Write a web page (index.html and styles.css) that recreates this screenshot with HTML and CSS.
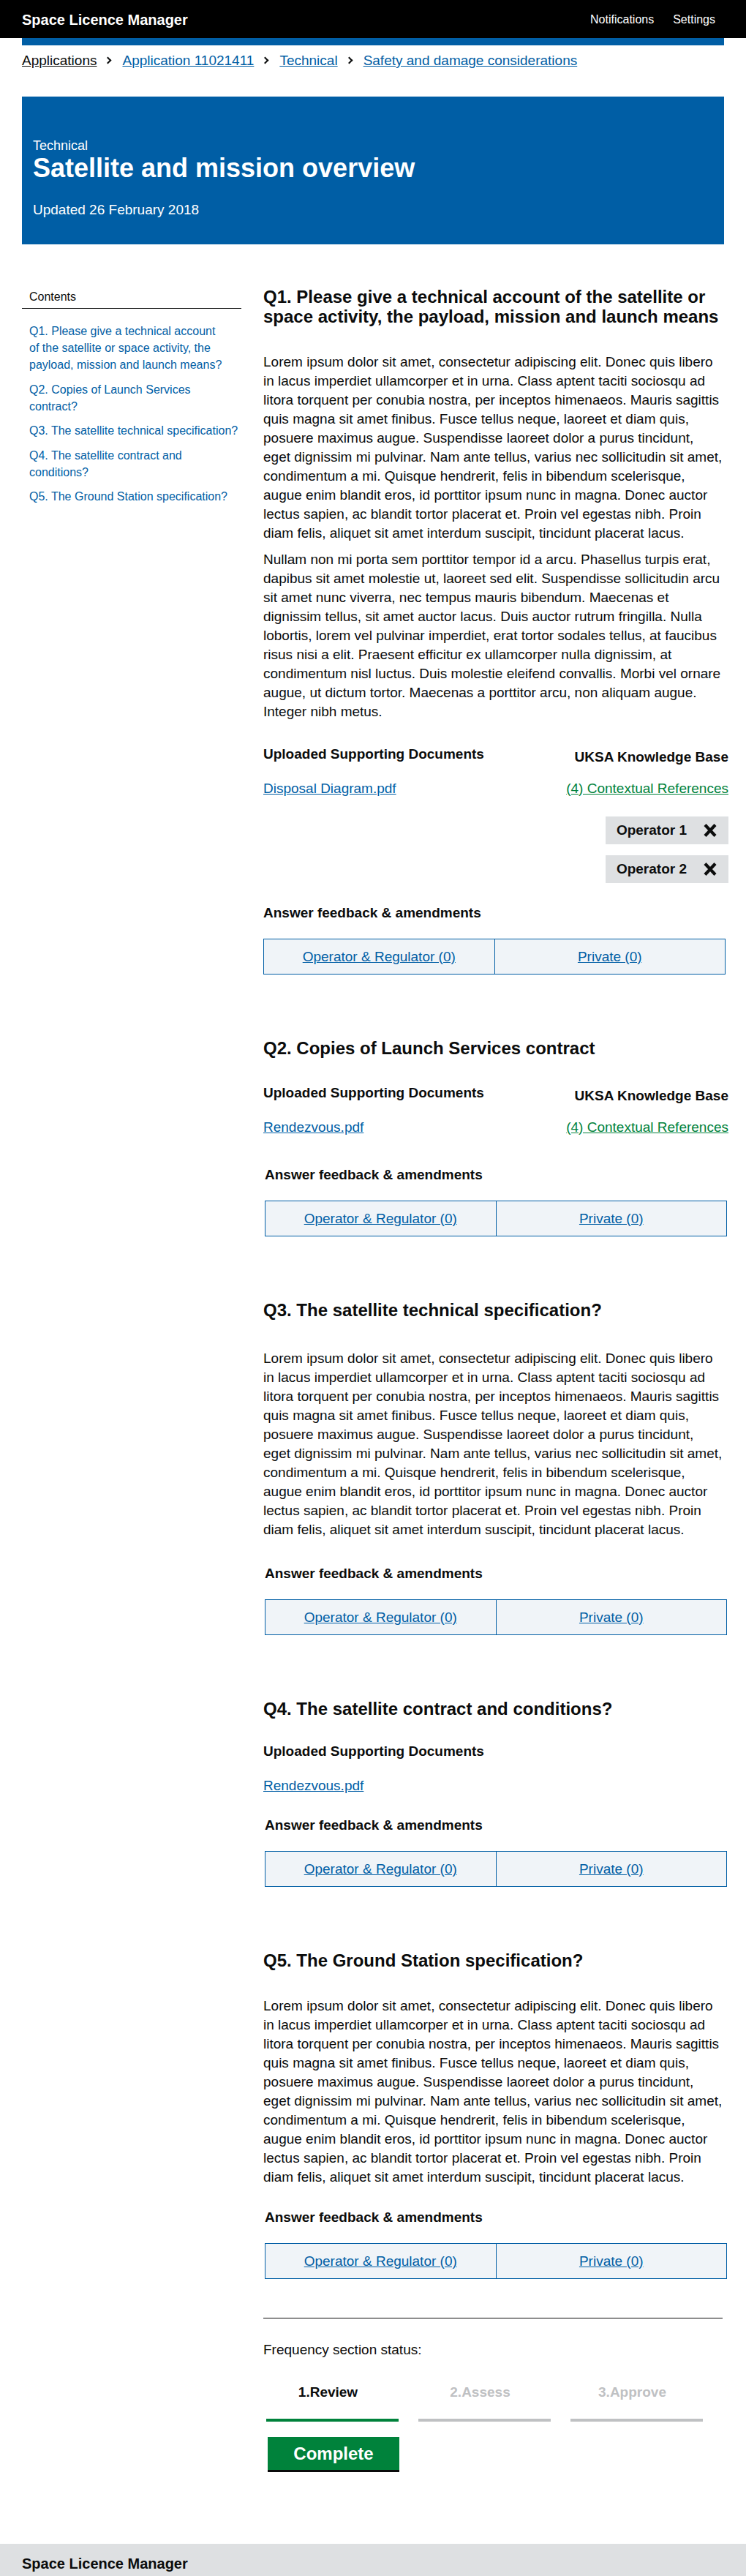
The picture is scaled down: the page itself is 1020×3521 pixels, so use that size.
FILE: index.html
```html
<!DOCTYPE html>
<html lang="en">
<head>
<meta charset="utf-8">
<title>Space Licence Manager</title>
<link rel="stylesheet" href="styles.css">
</head>
<body>
<header class="site-header">
  <div class="brand">Space Licence Manager</div>
  <nav class="header-nav">
    <a href="#">Notifications</a>
    <a href="#">Settings</a>
  </nav>
</header>

<div class="page">
  <div class="accent-bar"></div>

  <nav class="breadcrumbs">
    <a class="crumb crumb-root" href="#">Applications</a>
    <span class="chev"></span>
    <a class="crumb" href="#">Application 11021411</a>
    <span class="chev"></span>
    <a class="crumb" href="#">Technical</a>
    <span class="chev"></span>
    <a class="crumb" href="#">Safety and damage considerations</a>
  </nav>

  <section class="hero">
    <div class="hero-caption">Technical</div>
    <h1 class="hero-title">Satellite and mission overview</h1>
    <div class="hero-updated">Updated 26 February 2018</div>
  </section>

  <div class="layout">
    <aside class="sidebar">
      <h2 class="contents-title">Contents</h2>
      <ul class="toc">
        <li><a href="#q1">Q1. Please give a technical account<br>of the satellite or space activity, the payload, mission and launch means?</a></li>
        <li><a href="#q2">Q2. Copies of Launch Services contract?</a></li>
        <li><a href="#q3">Q3. The satellite technical specification?</a></li>
        <li><a href="#q4">Q4. The satellite contract and conditions?</a></li>
        <li><a href="#q5">Q5. The Ground Station specification?</a></li>
      </ul>
    </aside>

    <main class="main">
      <!-- Q1 -->
      <section class="question" id="q1">
        <h2 class="q-title">Q1. Please give a technical account of the satellite or space activity, the payload, mission and launch means</h2>
        <p class="answer answer-first">Lorem ipsum dolor sit amet, consectetur adipiscing elit. Donec quis libero in lacus imperdiet ullamcorper et in urna. Class aptent taciti sociosqu ad litora torquent per conubia nostra, per inceptos himenaeos. Mauris sagittis quis magna sit amet finibus. Fusce tellus neque, laoreet et diam quis, posuere maximus augue. Suspendisse laoreet dolor a purus tincidunt, eget dignissim mi pulvinar. Nam ante tellus, varius nec sollicitudin sit amet, condimentum a mi. Quisque hendrerit, felis in bibendum scelerisque, augue enim blandit eros, id porttitor ipsum nunc in magna. Donec auctor lectus sapien, ac blandit tortor placerat et. Proin vel egestas nibh. Proin diam felis, aliquet sit amet interdum suscipit, tincidunt placerat lacus.</p>
        <p class="answer">Nullam non mi porta sem porttitor tempor id a arcu. Phasellus turpis erat, dapibus sit amet molestie ut, laoreet sed elit. Suspendisse sollicitudin arcu sit amet nunc viverra, nec tempus mauris bibendum. Maecenas et dignissim tellus, sit amet auctor lacus. Duis auctor rutrum fringilla. Nulla lobortis, lorem vel pulvinar imperdiet, erat tortor sodales tellus, at faucibus risus nisi a elit. Praesent efficitur ex ullamcorper nulla dignissim, at condimentum nisl luctus. Duis molestie eleifend convallis. Morbi vel ornare augue, ut dictum tortor. Maecenas a porttitor arcu, non aliquam augue. Integer nibh metus.</p>

        <div class="docs docs-after-text">
          <div class="docs-left">
            <h3 class="sub-title">Uploaded Supporting Documents</h3>
            <a class="doc-link" href="#">Disposal Diagram.pdf</a>
          </div>
          <div class="docs-right">
            <h3 class="sub-title kb-title">UKSA Knowledge Base</h3>
            <a class="kb-link" href="#">(4) Contextual References</a>
            <div class="tags">
              <div class="tag"><span>Operator 1</span>
                <svg class="tag-x" width="20" height="18" viewBox="0 0 20 18" aria-hidden="true"><path d="M3 1.5 L17 16.5 M17 1.5 L3 16.5" stroke="#0b0c0c" stroke-width="4.2" fill="none"/></svg>
              </div>
              <div class="tag"><span>Operator 2</span>
                <svg class="tag-x" width="20" height="18" viewBox="0 0 20 18" aria-hidden="true"><path d="M3 1.5 L17 16.5 M17 1.5 L3 16.5" stroke="#0b0c0c" stroke-width="4.2" fill="none"/></svg>
              </div>
            </div>
          </div>
        </div>

        <div class="fb-block">
          <h3 class="sub-title feedback-title fb-after-tags">Answer feedback &amp; amendments</h3>
          <div class="feedback">
            <div class="fb-cell"><a href="#">Operator &amp; Regulator (0)</a></div>
            <div class="fb-cell"><a href="#">Private (0)</a></div>
          </div>
        </div>
      </section>

      <!-- Q2 -->
      <section class="question question-next" id="q2">
        <h2 class="q-title">Q2. Copies of Launch Services contract</h2>
        <div class="docs docs-after-title">
          <div class="docs-left">
            <h3 class="sub-title">Uploaded Supporting Documents</h3>
            <a class="doc-link" href="#">Rendezvous.pdf</a>
          </div>
          <div class="docs-right">
            <h3 class="sub-title kb-title">UKSA Knowledge Base</h3>
            <a class="kb-link" href="#">(4) Contextual References</a>
          </div>
        </div>
        <div class="fb-block shifted">
          <h3 class="sub-title feedback-title fb-after-kb">Answer feedback &amp; amendments</h3>
          <div class="feedback">
            <div class="fb-cell"><a href="#">Operator &amp; Regulator (0)</a></div>
            <div class="fb-cell"><a href="#">Private (0)</a></div>
          </div>
        </div>
      </section>

      <!-- Q3 -->
      <section class="question question-next" id="q3">
        <h2 class="q-title">Q3. The satellite technical specification?</h2>
        <p class="answer answer-first answer-first-loose">Lorem ipsum dolor sit amet, consectetur adipiscing elit. Donec quis libero in lacus imperdiet ullamcorper et in urna. Class aptent taciti sociosqu ad litora torquent per conubia nostra, per inceptos himenaeos. Mauris sagittis quis magna sit amet finibus. Fusce tellus neque, laoreet et diam quis, posuere maximus augue. Suspendisse laoreet dolor a purus tincidunt, eget dignissim mi pulvinar. Nam ante tellus, varius nec sollicitudin sit amet, condimentum a mi. Quisque hendrerit, felis in bibendum scelerisque, augue enim blandit eros, id porttitor ipsum nunc in magna. Donec auctor lectus sapien, ac blandit tortor placerat et. Proin vel egestas nibh. Proin diam felis, aliquet sit amet interdum suscipit, tincidunt placerat lacus.</p>
        <div class="fb-block shifted">
          <h3 class="sub-title feedback-title fb-after-text-loose">Answer feedback &amp; amendments</h3>
          <div class="feedback">
            <div class="fb-cell"><a href="#">Operator &amp; Regulator (0)</a></div>
            <div class="fb-cell"><a href="#">Private (0)</a></div>
          </div>
        </div>
      </section>

      <!-- Q4 -->
      <section class="question question-next" id="q4">
        <h2 class="q-title">Q4. The satellite contract and conditions?</h2>
        <div class="docs docs-after-title-short">
          <div class="docs-left">
            <h3 class="sub-title">Uploaded Supporting Documents</h3>
            <a class="doc-link" href="#">Rendezvous.pdf</a>
          </div>
        </div>
        <div class="fb-block shifted">
          <h3 class="sub-title feedback-title fb-after-doc">Answer feedback &amp; amendments</h3>
          <div class="feedback">
            <div class="fb-cell"><a href="#">Operator &amp; Regulator (0)</a></div>
            <div class="fb-cell"><a href="#">Private (0)</a></div>
          </div>
        </div>
      </section>

      <!-- Q5 -->
      <section class="question question-next" id="q5">
        <h2 class="q-title">Q5. The Ground Station specification?</h2>
        <p class="answer answer-first">Lorem ipsum dolor sit amet, consectetur adipiscing elit. Donec quis libero in lacus imperdiet ullamcorper et in urna. Class aptent taciti sociosqu ad litora torquent per conubia nostra, per inceptos himenaeos. Mauris sagittis quis magna sit amet finibus. Fusce tellus neque, laoreet et diam quis, posuere maximus augue. Suspendisse laoreet dolor a purus tincidunt, eget dignissim mi pulvinar. Nam ante tellus, varius nec sollicitudin sit amet, condimentum a mi. Quisque hendrerit, felis in bibendum scelerisque, augue enim blandit eros, id porttitor ipsum nunc in magna. Donec auctor lectus sapien, ac blandit tortor placerat et. Proin vel egestas nibh. Proin diam felis, aliquet sit amet interdum suscipit, tincidunt placerat lacus.</p>
        <div class="fb-block shifted">
          <h3 class="sub-title feedback-title fb-after-text">Answer feedback &amp; amendments</h3>
          <div class="feedback">
            <div class="fb-cell"><a href="#">Operator &amp; Regulator (0)</a></div>
            <div class="fb-cell"><a href="#">Private (0)</a></div>
          </div>
        </div>
      </section>

      <hr class="divider">

      <section class="status">
        <div class="status-label">Frequency section status:</div>
        <ol class="steps">
          <li class="step step-active"><span class="step-name">1.Review</span><span class="step-bar"></span></li>
          <li class="step"><span class="step-name">2.Assess</span><span class="step-bar"></span></li>
          <li class="step"><span class="step-name">3.Approve</span><span class="step-bar"></span></li>
        </ol>
        <button class="complete-btn" type="button">Complete</button>
      </section>
    </main>
  </div>
</div>

<footer class="site-footer">
  <div class="footer-brand">Space Licence Manager</div>
</footer>
</body>
</html>
```

FILE: styles.css
```css
* { box-sizing: border-box; }

body {
  margin: 0;
  font-family: "Liberation Sans", Arial, sans-serif;
  color: #0b0c0c;
  background: #fff;
}

/* Header */
.site-header {
  height: 52px;
  background: #000;
  color: #fff;
  display: flex;
  align-items: center;
  justify-content: space-between;
  padding: 2px 42px 0 30px;
}
.brand {
  font-size: 20px;
  font-weight: bold;
}
.header-nav {
  display: flex;
  gap: 26px;
  font-size: 16px;
}
.header-nav a {
  color: #fff;
  text-decoration: none;
}

.page {
  padding: 0 30px;
}
.accent-bar {
  height: 10px;
  background: #005ea5;
}

/* Breadcrumbs */
.breadcrumbs {
  margin-top: 8px;
  display: flex;
  align-items: center;
  font-size: 19px;
  line-height: 25px;
}
.crumb {
  color: #005ea5;
  text-decoration: underline;
}
.crumb-root {
  color: #0b0c0c;
}
.chev {
  display: inline-block;
  width: 7px;
  height: 7px;
  border-top: 2px solid #0b0c0c;
  border-right: 2px solid #0b0c0c;
  transform: rotate(45deg);
  margin: 0 16px 0 12px;
}

/* Hero */
.hero {
  margin-top: 37px;
  height: 202px;
  background: #005ea5;
  color: #fff;
  padding: 56px 15px 0;
}
.hero-caption {
  font-size: 18px;
  line-height: 22px;
}
.hero-title {
  margin: 0;
  font-size: 36px;
  line-height: 40px;
  font-weight: bold;
}
.hero-updated {
  margin-top: 24px;
  font-size: 19px;
  line-height: 25px;
}

/* Layout */
.layout {
  display: flex;
  align-items: flex-start;
  padding-top: 58px;
}
.sidebar {
  flex: none;
  width: 300px;
  padding-top: 4px;
}
.contents-title {
  margin: 0;
  font-size: 16px;
  line-height: 20px;
  font-weight: normal;
  padding: 0 10px 5px;
  border-bottom: 1px solid #0b0c0c;
}
.toc {
  list-style: none;
  margin: 19px 0 0;
  padding: 0 2px 0 10px;
  font-size: 16px;
  line-height: 23px;
}
.toc li {
  margin-bottom: 10.5px;
}
.toc a {
  color: #005ea5;
  text-decoration: none;
}

.main {
  flex: none;
  width: 630px;
  margin-left: 30px;
  padding-bottom: 101px;
}

/* Questions */
.question-next {
  margin-top: 87px;
}
.q-title {
  margin: 0;
  font-size: 24px;
  line-height: 27px;
  font-weight: bold;
}
.answer {
  margin: 10px 0 0;
  font-size: 19px;
  line-height: 26px;
}
.answer-first {
  margin-top: 36px;
}
.answer-first-loose {
  margin-top: 40px;
}

.docs {
  display: flex;
  justify-content: space-between;
  align-items: flex-start;
  margin-right: -6px;
}
.docs-after-text { margin-top: 32px; }
.docs-after-title { margin-top: 35px; }
.docs-after-title-short { margin-top: 32px; }

.docs-left {
  display: flex;
  flex-direction: column;
  align-items: flex-start;
}
.docs-right {
  display: flex;
  flex-direction: column;
  align-items: flex-end;
}
.sub-title {
  margin: 0;
  font-size: 19px;
  line-height: 25px;
  font-weight: bold;
}
.kb-title {
  margin-top: 4px;
}
.doc-link {
  margin-top: 22px;
  font-size: 19px;
  line-height: 25px;
  color: #005ea5;
  text-decoration: underline;
}
.kb-link {
  margin-top: 18px;
  font-size: 19px;
  line-height: 25px;
  color: #00823b;
  text-decoration: underline;
}

.tags {
  margin-top: 26px;
  display: flex;
  flex-direction: column;
  align-items: flex-end;
  gap: 15px;
}
.tag {
  height: 38px;
  display: flex;
  align-items: center;
  gap: 22px;
  padding: 0 15px;
  background: #dee0e2;
  font-size: 19px;
  font-weight: bold;
}
.tag-x {
  display: block;
}

.fb-block {
  margin-right: -2px;
}
.fb-block.shifted {
  margin-left: 2px;
  margin-right: -4px;
}
.feedback-title { margin-top: 28px; }
.fb-after-tags { margin-top: 28px; }
.fb-after-kb { margin-top: 40px; }
.fb-after-doc { margin-top: 29px; }
.fb-after-text { margin-top: 29px; }
.fb-after-text-loose { margin-top: 34px; }

.feedback {
  margin-top: 23px;
  display: flex;
  height: 49px;
  border: 1px solid #005ea5;
  background: #f0f4f8;
}
.fb-cell {
  flex: 1;
  display: flex;
  align-items: center;
  justify-content: center;
  font-size: 19px;
}
.fb-cell + .fb-cell {
  border-left: 1px solid #005ea5;
}
.fb-cell a {
  color: #005ea5;
  text-decoration: underline;
}

/* Status */
.divider {
  margin: 53px 0 0;
  width: 628px;
  height: 0;
  border: 0;
  border-top: 1px solid #0b0c0c;
}
.status-label {
  margin-top: 30px;
  font-size: 19px;
  line-height: 25px;
}
.steps {
  list-style: none;
  margin: 33px 0 0 4px;
  padding: 0;
  display: flex;
  gap: 27px;
}
.step {
  width: 181px;
  display: flex;
  flex-direction: column;
}
.step-name {
  text-align: center;
  padding-right: 12px;
  font-size: 19px;
  line-height: 25px;
  font-weight: bold;
  color: #bfc1c3;
}
.step-bar {
  margin-top: 24px;
  height: 4px;
  background: #bfc1c3;
}
.step-active .step-name {
  color: #0b0c0c;
}
.step-active .step-bar {
  background: #00823b;
}

.complete-btn {
  display: block;
  margin: 21px 0 0 6px;
  width: 180px;
  height: 45px;
  border: 0;
  background: #00823b;
  color: #fff;
  font-family: "Liberation Sans", Arial, sans-serif;
  font-size: 24px;
  font-weight: bold;
  box-shadow: 0 3px 0 #0b0c0c;
  padding: 0;
}

/* Footer */
.site-footer {
  height: 47px;
  background: #dee0e2;
  padding: 8px 30px 0;
  display: flex;
  align-items: center;
}
.footer-brand {
  font-size: 20px;
  font-weight: bold;
}
```
